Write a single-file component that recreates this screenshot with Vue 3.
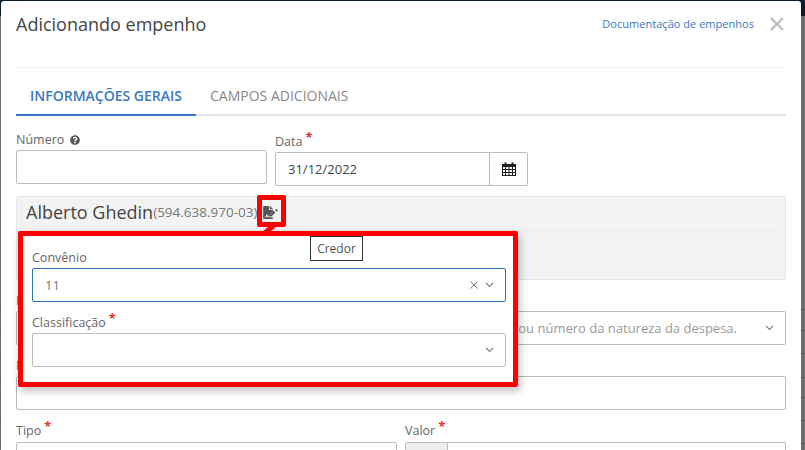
<template>
  <div class="page">
    <div class="modal">
      <header class="modal-head">
        <h1 class="title">Adicionando empenho</h1>
        <a class="doc-link">Documentação de empenhos</a>
        <svg class="close" viewBox="0 0 14 14">
          <path d="M1 1 L13 13 M13 1 L1 13" />
        </svg>
      </header>

      <nav class="tabs">
        <span class="tab active">INFORMAÇÕES GERAIS</span>
        <span class="tab">CAMPOS ADICIONAIS</span>
      </nav>

      <div class="row first">
        <div class="field numero">
          <label class="label">
            Número
            <svg class="help" viewBox="0 0 512 512">
              <path d="M504 256c0 136.997-111.043 248-248 248S8 392.997 8 256C8 119.083 119.043 8 256 8s248 111.083 248 248zM262.655 90c-54.497 0-89.255 22.957-116.549 63.758-3.536 5.286-2.353 12.415 2.715 16.258l34.699 26.31c5.205 3.947 12.621 3.008 16.665-2.122 17.864-22.658 30.113-35.797 57.303-35.797 20.429 0 45.698 13.148 45.698 32.958 0 14.976-12.363 22.667-32.534 33.976C247.128 238.528 216 254.941 216 296v4c0 6.627 5.373 12 12 12h56c6.627 0 12-5.373 12-12v-1.333c0-28.462 83.186-29.647 83.186-106.667 0-58.002-60.165-102-116.531-102zM256 338c-25.365 0-46 20.635-46 46 0 25.364 20.635 46 46 46s46-20.636 46-46c0-25.365-20.635-46-46-46z" />
            </svg>
          </label>
          <div class="input"></div>
        </div>
        <div class="field data">
          <label class="label req">Data<sup>*</sup></label>
          <div class="group">
            <div class="input grow">31/12/2022</div>
            <span class="addon cal">
              <svg viewBox="0 0 14 14" width="14" height="14">
                <rect x="0.5" y="2.5" width="13" height="11" fill="none" stroke="#222" />
                <rect x="0" y="2" width="14" height="3" fill="#222" />
                <path d="M3.5 0.5 V3.5 M10.5 0.5 V3.5" stroke="#222" stroke-width="2" />
                <path d="M0 7.5 H14 M0 10.5 H14 M3.5 5 V14 M7 5 V14 M10.5 5 V14" stroke="#222" stroke-width="1" />
              </svg>
            </span>
          </div>
        </div>
      </div>

      <section class="credor">
        <div class="credor-name">
          <span class="name">Alberto Ghedin</span><span class="doc">(594.638.970-03)</span>
          <svg class="sign" viewBox="0 0 576 512">
            <path d="M218.17 424.14c-2.95-5.92-8.09-6.52-10.17-6.52s-7.22.59-10.02 6.19l-7.67 15.34c-6.37 12.78-25.03 11.37-29.48-2.09L144 386.59l-10.61 31.88c-5.89 17.66-22.38 29.53-41 29.53H80c-8.84 0-16-7.16-16-16s7.16-16 16-16h12.39c4.83 0 9.11-3.08 10.64-7.66l18.19-54.64c3.3-9.81 12.44-16.41 22.78-16.41s19.48 6.59 22.77 16.41l13.88 41.64c19.75-16.19 54.06-9.7 66 14.16 1.89 3.78 5.49 5.95 9.36 6.26v-82.12l128-127.09V160H248c-13.2 0-24-10.8-24-24V0H24C10.7 0 0 10.7 0 24v464c0 13.3 10.7 24 24 24h336c13.3 0 24-10.7 24-24v-40l-128-.11c-16.12-.31-30.58-9.28-37.83-23.75zM384 121.9c0-6.3-2.5-12.4-7-16.9L279.1 7c-4.5-4.5-10.6-7-17-7H256v128h128v-6.1zm-128 230V416h64.1l161.7-162.8-67.9-67.9L256 351.9zm312.5-191.1l-31.9-31.9c-9.9-9.9-26-9.9-35.9 0l-27.3 27.3 67.9 67.9 27.3-27.3c9.9-9.9 9.9-26 0-36z" />
          </svg>
        </div>
      </section>

      <!-- só a ponta dos rótulos aparece, o resto fica sob o popover -->
      <div class="field block">
        <label class="label req">N</label>
        <div class="input select placeholder">
          <span class="ph-text">ou número da natureza da despesa.</span>
          <svg class="chev" viewBox="0 0 10 6"><path d="M1 1 L5 5 L9 1" /></svg>
        </div>
      </div>

      <div class="field block">
        <label class="label req">D</label>
        <div class="input"></div>
      </div>

      <div class="row last">
        <div class="field half">
          <label class="label req">Tipo<sup>*</sup></label>
          <div class="input"></div>
        </div>
        <div class="field half">
          <label class="label req">Valor<sup>*</sup></label>
          <div class="group">
            <span class="addon valor"></span>
            <div class="input grow"></div>
          </div>
        </div>
      </div>
    </div>

    <!-- marcações em vermelho por cima do formulário -->
    <div class="mark-icon"></div>
    <svg class="mark-tail" viewBox="0 0 14 5"><polygon points="6,0 14,0 8,5 0,5" /></svg>

    <div class="popover">
      <div class="field">
        <label class="label">Convênio</label>
        <div class="input select focused">
          <span>11</span>
          <span class="actions">
            <svg class="clear" viewBox="0 0 8 8"><path d="M0.5 0.5 L7.5 7.5 M7.5 0.5 L0.5 7.5" /></svg>
            <svg class="chev" viewBox="0 0 10 6"><path d="M1 1 L5 5 L9 1" /></svg>
          </span>
        </div>
      </div>
      <div class="field">
        <label class="label req">Classificação<sup>*</sup></label>
        <div class="input select">
          <span></span>
          <svg class="chev" viewBox="0 0 10 6"><path d="M1 1 L5 5 L9 1" /></svg>
        </div>
      </div>
    </div>

    <div class="tooltip">Credor</div>
  </div>
</template>

<script setup>
</script>

<style>
html, body {
  margin: 0;
  overflow: hidden;
}
</style>

<style scoped>
.page {
  position: relative;
  width: 805px;
  height: 450px;
  overflow: hidden;
  display: flex;
  box-sizing: border-box;
  padding: 1px 4px 0 1px;
  font-family: "Open Sans", "Liberation Sans", sans-serif;
  font-size: 13px;
  color: #666;
  background:
    linear-gradient(#0b1c2c, #0b1c2c) 0 0 / 100% 16px no-repeat,
    linear-gradient(#555, #555) 0 309px / 100% 1px no-repeat,
    linear-gradient(#555, #555) 0 330px / 100% 1px no-repeat,
    linear-gradient(#555, #555) 0 353px / 100% 1px no-repeat,
    linear-gradient(#555, #555) 0 377px / 100% 1px no-repeat,
    linear-gradient(#555, #555) 0 397px / 100% 1px no-repeat,
    linear-gradient(#555, #555) 0 420px / 100% 1px no-repeat,
    linear-gradient(#555, #555) 0 443px / 100% 1px no-repeat,
    #6e6e6e;
}

.modal {
  flex: 1;
  height: 470px;
  box-sizing: border-box;
  padding: 0 15px;
  background: #fff;
  border-radius: 3px 3px 0 0;
}

/* cabeçalho */
.modal-head {
  height: 67px;
  box-sizing: border-box;
  padding-top: 11px;
  display: flex;
  align-items: flex-start;
  border-bottom: 1px solid #f3f3f3;
}

.title {
  flex: 1;
  margin: 0;
  font-size: 18px;
  font-weight: 400;
  line-height: 24px;
  color: #444;
}

.doc-link {
  font-size: 11.05px;
  line-height: 24px;
  color: #3a78c4;
}

.close {
  width: 14px;
  height: 14px;
  margin: 5px 2px 0 16px;
  fill: none;
  stroke: #bdbdbd;
  stroke-width: 2.4;
}

/* abas */
.tabs {
  height: 48px;
  box-sizing: border-box;
  display: flex;
  border-bottom: 2px solid #e2e2ea;
}

.tab {
  height: 48px;
  box-sizing: border-box;
  padding: 0 14px;
  line-height: 56px;
  font-size: 14px;
  color: #888;
}

.tab.active {
  font-weight: 600;
  color: #3a78c4;
  border-bottom: 2px solid #3a78c4;
}

/* campos */
.row {
  display: flex;
  gap: 8px;
}

.row.first {
  margin-top: 15px;
}

.row.last {
  margin-top: 10px;
}

.row.last .label.req {
  height: 21px;
}

.numero {
  width: 251px;
}

.data {
  width: 253px;
}

.half {
  flex: 1;
}

.block {
  margin-top: 10px;
}

.label {
  display: block;
  height: 18px;
  margin-bottom: 1px;
  line-height: 18px;
  font-size: 12.5px;
  color: #666;
}

.label.req {
  height: 20px;
  padding-top: 2px;
  box-sizing: border-box;
}

.label sup {
  position: relative;
  top: -4px;
  margin-left: 3px;
  font-size: 13px;
  font-weight: 700;
  line-height: 0;
  vertical-align: baseline;
  color: #e0322c;
}

.help {
  width: 10px;
  height: 10px;
  margin-left: 2px;
  fill: #555;
  vertical-align: -1px;
}

.input {
  height: 34px;
  box-sizing: border-box;
  padding: 0 11px 0 12px;
  display: flex;
  align-items: center;
  border: 1px solid #bbb;
  border-radius: 2px;
  background: #fff;
  font-size: 13px;
  color: #444;
}

.group {
  display: flex;
}

.grow {
  flex: 1;
}

.group .input.grow:first-child {
  border-radius: 2px 0 0 2px;
}

.group .addon + .input {
  border-left: 0;
  border-radius: 0 2px 2px 0;
}

.addon {
  height: 34px;
  box-sizing: border-box;
  display: flex;
  align-items: center;
  justify-content: center;
  border: 1px solid #bbb;
}

.addon.cal {
  width: 38px;
  border-left: 0;
  border-radius: 0 2px 2px 0;
  background: #fff;
}

.addon.valor {
  width: 43px;
  background: #eee;
  border-radius: 2px 0 0 2px;
}

.select {
  justify-content: space-between;
}

.placeholder {
  color: #999;
}

.ph-text {
  margin: 0 28px 0 auto;
  white-space: nowrap;
}

.focused {
  border-color: #2f74bd;
  color: #777;
}

.actions {
  display: flex;
  align-items: center;
  gap: 7px;
}

.chev {
  width: 9px;
  height: 5.4px;
  fill: none;
  stroke: #777;
  stroke-width: 1.2;
}

.clear {
  width: 8px;
  height: 8px;
  fill: none;
  stroke: #777;
  stroke-width: 1;
}

/* credor */
.credor {
  height: 84px;
  box-sizing: border-box;
  margin-top: 10px;
  padding: 0 9px;
  background: #f3f3f3;
  border: 1px solid #e6e6e6;
  border-radius: 2px;
}

.credor-name {
  height: 34px;
  box-sizing: border-box;
  padding-bottom: 4px;
  display: flex;
  align-items: center;
  border-bottom: 1px solid #ebebeb;
}

.name {
  font-size: 18px;
  color: #444;
}

.doc {
  font-size: 13.5px;
  color: #777;
}

.sign {
  width: 15px;
  height: 13px;
  margin: 2px 0 0 6px;
  fill: #555;
}

/* destaques vermelhos */
.mark-icon {
  position: absolute;
  left: 257px;
  top: 195px;
  width: 29px;
  height: 32px;
  box-sizing: border-box;
  border: 5px solid #f00;
  border-radius: 2px;
}

.mark-tail {
  position: absolute;
  left: 262px;
  top: 227px;
  width: 14px;
  height: 5px;
  fill: #f00;
}

.popover {
  position: absolute;
  left: 18px;
  top: 231px;
  width: 500px;
  height: 156px;
  box-sizing: border-box;
  padding: 13px 7px 0 9px;
  display: flex;
  flex-direction: column;
  gap: 10px;
  background: #fff;
  border: 5px solid #f00;
  border-radius: 2px;
  box-shadow: 2px 4px 8px rgba(0, 0, 0, 0.25);
}

.tooltip {
  position: absolute;
  left: 310px;
  top: 236px;
  width: 53px;
  height: 25px;
  box-sizing: border-box;
  border: 1px solid #333;
  background: #fff;
  font-size: 12px;
  line-height: 23px;
  text-align: center;
  color: #555;
}
</style>
